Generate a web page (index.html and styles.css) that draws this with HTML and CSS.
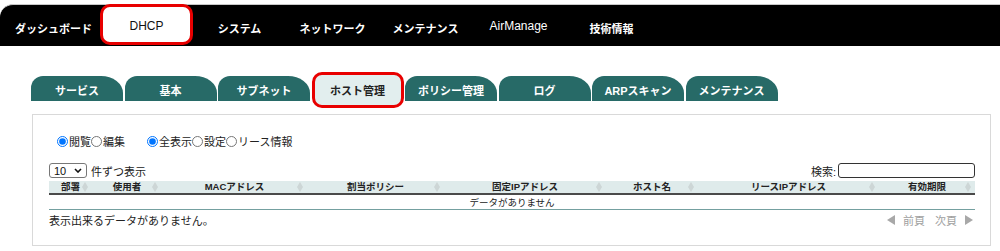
FILE: index.html
```html
<!DOCTYPE html>
<html lang="ja">
<head>
  <meta charset="UTF-8">
  <meta name="viewport" content="width=device-width, initial-scale=1.0">
  <title>DHCP ホスト管理</title>
  <link rel="stylesheet" href="styles.css">
</head>
<body>
  <header class="topbar">
    <nav class="mainnav">
      <a class="nav-item">ダッシュボード</a>
      <a class="nav-item active">DHCP</a>
      <a class="nav-item">システム</a>
      <a class="nav-item">ネットワーク</a>
      <a class="nav-item">メンテナンス</a>
      <a class="nav-item latin">AirManage</a>
      <a class="nav-item">技術情報</a>
    </nav>
  </header>

  <div class="tabs">
    <a class="tab">サービス</a>
    <a class="tab">基本</a>
    <a class="tab">サブネット</a>
    <a class="tab active">ホスト管理</a>
    <a class="tab">ポリシー管理</a>
    <a class="tab">ログ</a>
    <a class="tab">ARPスキャン</a>
    <a class="tab">メンテナンス</a>
  </div>

  <section class="panel">
    <div class="view-opts">
      <label><input type="radio" name="mode" checked>閲覧</label>
      <label><input type="radio" name="mode">編集</label>
      <span class="opt-gap"></span>
      <label><input type="radio" name="filter" checked>全表示</label>
      <label><input type="radio" name="filter">設定</label>
      <label><input type="radio" name="filter">リース情報</label>
    </div>

    <div class="toolbar">
      <label class="length">
        <span class="select-wrap">
          <select><option>10</option><option>25</option><option>50</option></select>
          <svg class="chevron" width="8" height="5" viewBox="0 0 8 5"><polyline points="1,1 4,4 7,1" fill="none" stroke="#111" stroke-width="1.6"/></svg>
        </span>
        件ずつ表示
      </label>
      <label class="search">検索:<input type="text"></label>
    </div>

    <table class="hosts">
      <thead>
        <tr>
          <th class="c1">部署</th>
          <th class="c2">使用者</th>
          <th class="c3">MACアドレス</th>
          <th class="c4">割当ポリシー</th>
          <th class="c5">固定IPアドレス</th>
          <th class="c6">ホスト名</th>
          <th class="c7">リースIPアドレス</th>
          <th class="c8">有効期限</th>
        </tr>
      </thead>
      <tbody>
        <tr><td colspan="8">データがありません</td></tr>
      </tbody>
    </table>

    <div class="table-foot">
      <span>表示出来るデータがありません。</span>
      <span class="pager">
        <svg width="8" height="10" viewBox="0 0 8 10"><polygon points="8,0 8,10 0,5" fill="#a8a8a8"/></svg>
        <a>前頁</a>
        <a>次頁</a>
        <svg width="8" height="10" viewBox="0 0 8 10"><polygon points="0,0 0,10 8,5" fill="#a8a8a8"/></svg>
      </span>
    </div>
  </section>
</body>
</html>
```

FILE: styles.css
```css
body {
  margin: 0;
  font-family: "Liberation Sans", "Noto Sans CJK JP", sans-serif;
  color: #222;
  background: #fff;
}
a {
  cursor: pointer;
}
.topbar {
  margin-top: 4px;
  height: 41px;
  background: #000;
  border-top: 1px solid #c8c8c8;
  border-top-left-radius: 13px;
}
.mainnav {
  display: flex;
  height: 41px;
  padding-left: 7px;
}
.nav-item {
  width: 93px;
  display: flex;
  align-items: center;
  justify-content: center;
  padding-top: 5px;
  box-sizing: border-box;
  color: #fff;
  font-size: 11px;
  font-weight: bold;
}
.nav-item.latin {
  padding-top: 0;
  font-weight: normal;
  font-size: 12px;
}
.nav-item.active {
  margin-top: -1px;
  height: 41px;
  padding-top: 3px;
  background: #fff;
  color: #111;
  border: 3px solid #e80000;
  border-radius: 10px;
  font-size: 12px;
  font-weight: normal;
}
.tabs {
  display: flex;
  gap: 1.5px;
  align-items: flex-start;
  height: 25px;
  margin-top: 30px;
  padding-left: 31px;
}
.tab {
  width: 92px;
  height: 25px;
  display: flex;
  align-items: center;
  justify-content: center;
  padding-top: 2px;
  box-sizing: border-box;
  background: #276a67;
  color: #fff;
  font-size: 11px;
  font-weight: bold;
  border-radius: 12px 22px 0 0 / 12px 17px 0 0;
}
.tab.active {
  margin: -4px 0 -7px;
  height: 36px;
  padding-top: 0;
  background: #e2eeee;
  color: #222;
  border: 3px solid #e80000;
  border-radius: 10px;
}
.panel {
  margin: 13px 9px 0 32px;
  height: 132px;
  box-sizing: border-box;
  border: 1px solid #d9d9d9;
  padding: 0 15px 0 16px;
}
.view-opts {
  display: flex;
  align-items: center;
  height: 14px;
  margin-top: 19px;
  padding-left: 8px;
  font-size: 11px;
  color: #222;
}
.view-opts label {
  display: flex;
  align-items: center;
}
.view-opts input {
  width: 11px;
  height: 11px;
  margin: 0 1px 0 0;
}
.opt-gap {
  width: 22px;
}
.toolbar {
  display: flex;
  justify-content: space-between;
  align-items: center;
  height: 15px;
  margin-top: 15px;
  font-size: 11px;
}
.length {
  display: flex;
  align-items: center;
  gap: 4px;
}
.select-wrap {
  position: relative;
  display: flex;
}
.select-wrap select {
  appearance: none;
  width: 38px;
  height: 15px;
  margin: 0;
  padding: 0 0 0 4px;
  font-size: 11px;
  font-family: "Liberation Sans", sans-serif;
  color: #111;
  border: 1px solid #777;
  border-radius: 3px;
  background: #fff;
}
.chevron {
  position: absolute;
  right: 5px;
  top: 5px;
  pointer-events: none;
}
.search {
  display: flex;
  align-items: center;
  gap: 2px;
}
.search input {
  width: 137px;
  height: 15px;
  box-sizing: border-box;
  border: 1px solid #333;
  border-radius: 3px;
  padding: 0 3px;
}
.hosts {
  width: 100%;
  margin-top: 3px;
  border-collapse: collapse;
  table-layout: fixed;
}
.hosts th {
  position: relative;
  box-sizing: border-box;
  height: 12px;
  padding: 0 5px;
  background: #dfebeb;
  border-bottom: 2px solid #4a4a4a;
  font-size: 9.5px;
  font-weight: bold;
  color: #222;
  line-height: 12px;
  white-space: nowrap;
}
.hosts th::before,
.hosts th::after {
  content: "";
  position: absolute;
  right: 4px;
  border-left: 3.5px solid transparent;
  border-right: 3.5px solid transparent;
}
.hosts th::before {
  top: 1px;
  border-bottom: 5px solid #cdd6d6;
}
.hosts th::after {
  bottom: 1px;
  border-top: 5px solid #cdd6d6;
}
.c1 { width: 43px; }
.c2 { width: 70px; }
.c3 { width: 145px; }
.c4 { width: 137px; }
.c5 { width: 162px; }
.c6 { width: 92px; }
.c7 { width: 181px; }
.c8 { width: 96px; }
.hosts td {
  height: 14px;
  padding: 0;
  text-align: center;
  font-size: 9.5px;
  color: #222;
  border-bottom: 1px solid #74a0a0;
}
.table-foot {
  display: flex;
  justify-content: space-between;
  align-items: center;
  margin-top: 2px;
  height: 15px;
  font-size: 11px;
}
.pager {
  display: flex;
  align-items: center;
  gap: 6px;
  padding-right: 2px;
  color: #a0a0a0;
}
.pager a {
  margin: 0 2px;
}
```
